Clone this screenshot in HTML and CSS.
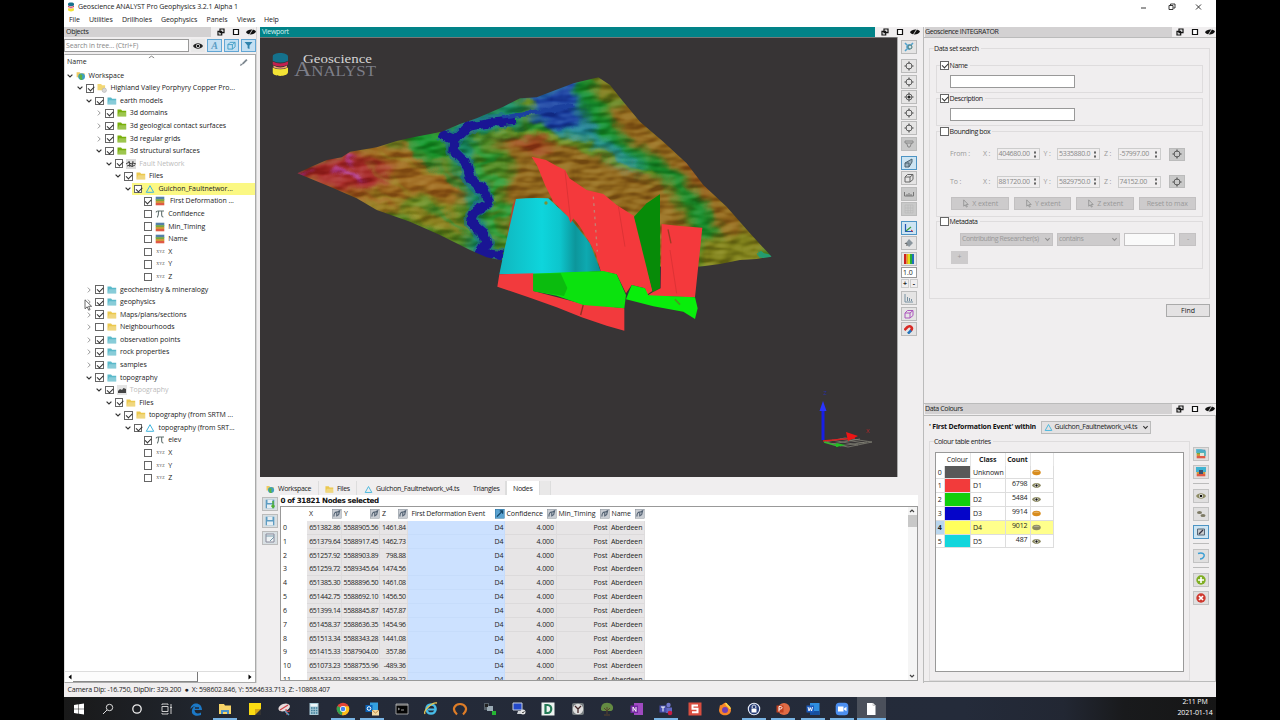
FILE: index.html
```html
<!DOCTYPE html>
<html lang="en">
<head>
<meta charset="utf-8">
<title>Geoscience ANALYST Pro Geophysics 3.2.1 Alpha 1</title>
<link rel="stylesheet" href="styles.css">
</head>
<body>
<svg class="defs" width="0" height="0">
  <defs>
    <symbol id="down" viewBox="0 0 10 10"><path d="M2.600 3.600 5 6l2.400-2.400" fill="none" stroke="#333" stroke-width="1.200"/></symbol>
    <symbol id="right" viewBox="0 0 10 10"><path d="M3.800 2.600 6.200 5 3.800 7.400" fill="none" stroke="#999" stroke-width="1"/></symbol>
    <symbol id="folder" viewBox="0 0 10 10"><path d="M.5 1.500h3.600l1 1.200h4.100v5.800H.5z" fill="currentColor"/><path d="M.5 8.500 2 4.300h7.800l-.9 4.200z" fill="#fff" fill-opacity=".28"/></symbol>
    <symbol id="world" viewBox="0 0 10 10"><path d="M.6 1.200h3l1 1h4v4h-8z" fill="#f0cc60"/><circle cx="5.600" cy="5.600" r="3.400" fill="#3f9fc0"/><path d="M4 3.200c2 0 3 1 2 2.600s1.500 2 0 3.100C4 9 2.500 7 4 3.200z" fill="#5eb33c"/></symbol>
    <symbol id="project" viewBox="0 0 10 10"><path d="M.5 1h3.600l1 1.200h3v5H.5z" fill="#f2d774"/><circle cx="7.300" cy="7.300" r="2.200" fill="#d8d8d8" stroke="#aaa" stroke-width=".5"/></symbol>
    <symbol id="tri" viewBox="0 0 10 10"><path d="M5 1.700 8.700 8.300H1.300z" fill="none" stroke="#3fb4dd" stroke-width="1"/></symbol>
    <symbol id="strata" viewBox="0 0 10 10"><path d="M.7.700h8.600v3H.7z" fill="#5580a8"/><path d="M.7 3.200h8.600v2H.7z" fill="#79a83e"/><path d="M.7 5h8.600v2H.7z" fill="#d0973a"/><path d="M.7 7h8.600v2.300H.7z" fill="#e05a45"/></symbol>
    <symbol id="pi" viewBox="0 0 10 10"><path d="M1 3.400C1.300 2 2 2 3 2h6M3.600 2.200C3.600 5 3.300 7 2.300 8.400M6.700 2.200c-.2 4-.2 6 1.700 5.800" fill="none" stroke="#61706e" stroke-width="1.100"/></symbol>
    <symbol id="fault" viewBox="0 0 10 10"><path d="M0 0h10v10H0z" fill="#dcdcdc"/><path d="M0 5 3 3l2 2 2-1 3 1M1 7l3-1 2 1.500L9 6M3 2l1 6M7 2 6 8" fill="none" stroke="#444" stroke-width="1"/></symbol>
    <symbol id="terrain" viewBox="0 0 10 10"><path d="M0 0h10v10H0z" fill="#e4e4e4"/><path d="M1 8V6l2-2 2 1 1.500-2L9 4v4z" fill="#444"/></symbol>
    <symbol id="eye" viewBox="0 0 10 10"><path d="M0 5c2-3.600 8-3.600 10 0C8 8.600 2 8.600 0 5z" fill="currentColor"/><circle cx="5" cy="5" r="2" fill="#fff"/><circle cx="5" cy="5" r="1.300" fill="#111"/></symbol>
    <symbol id="gold" viewBox="0 0 10 10"><ellipse cx="5" cy="5" rx="4.700" ry="3" fill="currentColor"/><path d="M1.500 4.300c1.500-1.500 5.500-1.500 7 0z" fill="#fff" opacity=".4"/></symbol>
    <symbol id="float" viewBox="0 0 10 10"><path d="M4 2h4v3.600H4zM2 4.400h3.700V8H2z" fill="#eee" stroke="#111" stroke-width="1.200"/></symbol>
    <symbol id="max" viewBox="0 0 10 10"><path d="M2.500 2.500h5v5h-5z" fill="#fff" stroke="#111" stroke-width="1.200"/></symbol>
    <symbol id="hide" viewBox="0 0 10 10"><path d="M0 5.200C1.500 2 8 1.500 10 4.400 8.500 8 2 8.500 0 5.200z" fill="#111"/><path d="M2.500 9 7.500 1" stroke="#ddd" stroke-width=".9"/></symbol>
    <symbol id="filter" viewBox="0 0 10 10"><path d="M.6 1h8.800L6.100 5v4L4 8V5z" fill="#2f83ad"/></symbol>
    <symbol id="target" viewBox="0 0 10 10"><circle cx="5" cy="5" r="3" fill="none" stroke="#555" stroke-width=".9"/><path d="M5 .4v2.400M5 7.200v2.400M.4 5h2.400M7.200 5h2.400" stroke="#555" stroke-width="1.200"/></symbol>
    <symbol id="link" viewBox="0 0 10 10"><path d="M0 0h10v10H0z" fill="#c9cdd3" stroke="#8b9199"/><path d="M2 8c0-4 1-5 4-5l2-1-1 4-2 1M5 3v5" fill="none" stroke="#536273" stroke-width="1.200"/></symbol>
    <symbol id="linkon" viewBox="0 0 10 10"><path d="M0 0h10v10H0z" fill="#5aa2d0" stroke="#2d709b"/><path d="M2 8 8 2M5 2h3v3" fill="none" stroke="#134567" stroke-width="1.300"/></symbol>
    <symbol id="pick" viewBox="0 0 10 10"><path d="M3 1v7l1.700-1.500L6 9l1-.5-1.200-2.400H8z" fill="#ccc" stroke="#888" stroke-width=".8"/></symbol>
    <symbol id="disk" viewBox="0 0 10 10"><path d="M.7.700h8.600v8.600H.7z" fill="#5d9cc2"/><path d="M2.500.700h5v3.200h-5zM2 5.500h6v3.800H2z" fill="#e6eef3"/></symbol>
    <symbol id="cube" viewBox="0 0 10 10"><path d="M1 4h5v5H1zM1 4l2.500-2.500H9L6 4M6 9l3-2.500v-5" fill="none" stroke="currentColor" stroke-width="1"/></symbol>
    <symbol id="logo" viewBox="0 0 16 24"><path d="M0 4c0-5 16-5 16 0v4q-8 4-16 0z" fill="#14718c"/><path d="M0 9q8 4 16 0v3q-8 4-16 0z" fill="#c3204f"/><path d="M1 13q7 4 14 0v2q-7 3-14 0z" fill="#f0a070"/><path d="M0 15q8 4 16 0v5c0 5-16 5-16 0z" fill="#f3e335"/></symbol>
  </defs>
</svg>
<div class="app">
  <div class="titlebar"><svg class="tlogo"><use href="#logo"/></svg><span class="ttext">Geoscience ANALYST Pro Geophysics 3.2.1 Alpha 1</span>
    <svg class="winbtns" viewBox="0 0 70 12"><path d="M3 7h5M31 4.500h4v4h-4zM32.500 4.500V3H37v4h-1.500M58 3.500l5 5M63 3.500l-5 5" fill="none" stroke="#222" stroke-width=".9"/></svg></div>
  <div class="menubar"><span class="m1">File</span><span class="m2">Utilities</span><span class="m3">Drillholes</span><span class="m4">Geophysics</span><span class="m5">Panels</span><span class="m6">Views</span><span>Help</span></div>
  <div class="main">
    <section class="objects">
      <div class="dock"><span class="dtitle">Objects</span><svg><use href="#float"/></svg><svg><use href="#max"/></svg><svg><use href="#hide"/></svg></div>
      <div class="search"><span class="sinput">Search in tree... (Ctrl+F)</span><span class="eyeb"><svg><use href="#eye"/></svg></span><span class="sb"><i>A</i></span><span class="sb cy"><svg><use href="#cube"/></svg></span><span class="sb"><svg><use href="#filter"/></svg></span></div>
      <div class="treebox">
        <div class="thead"><span>Name</span><svg class="sortmark" viewBox="0 0 8 4"><path d="M1 3l3-2 3 2" fill="none" stroke="#777"/></svg><svg class="brush" viewBox="0 0 10 10"><path d="M1 9l1-3 2.500 1.500zM3 6l5-5 1.500 1.500L5 7z" fill="#7e8890"/></svg></div>
        <div class="tree">
          <div class="row l0"><svg><use href="#down"/></svg><svg class="ic"><use href="#world"/></svg>Workspace</div>
          <div class="row l1"><svg><use href="#down"/></svg><b class="cb on"></b><svg class="ic"><use href="#project"/></svg>Highland Valley Porphyry Copper Pro...</div>
          <div class="row l2"><svg><use href="#down"/></svg><b class="cb on"></b><svg class="ic blue"><use href="#folder"/></svg>earth models</div>
          <div class="row l3"><svg><use href="#right"/></svg><b class="cb on"></b><svg class="ic green"><use href="#folder"/></svg>3d domains</div>
          <div class="row l3"><svg><use href="#right"/></svg><b class="cb on"></b><svg class="ic green"><use href="#folder"/></svg>3d geological contact surfaces</div>
          <div class="row l3"><svg><use href="#right"/></svg><b class="cb on"></b><svg class="ic green"><use href="#folder"/></svg>3d regular grids</div>
          <div class="row l3"><svg><use href="#down"/></svg><b class="cb on"></b><svg class="ic green"><use href="#folder"/></svg>3d structural surfaces</div>
          <div class="row l4 dim"><svg><use href="#down"/></svg><b class="cb on"></b><svg class="ic"><use href="#fault"/></svg>Fault Network</div>
          <div class="row l5"><svg><use href="#down"/></svg><b class="cb on"></b><svg class="ic yellow"><use href="#folder"/></svg>Files</div>
          <div class="row l6 sel"><svg><use href="#down"/></svg><b class="cb on"></b><svg class="ic"><use href="#tri"/></svg>Guichon_Faultnetwor...</div>
          <div class="row l7"><b class="cb on"></b><svg class="ic"><use href="#strata"/></svg>&nbsp;First Deformation ...</div>
          <div class="row l7"><b class="cb"></b><svg class="ic"><use href="#pi"/></svg>Confidence</div>
          <div class="row l7"><b class="cb"></b><svg class="ic"><use href="#strata"/></svg>Min_Timing</div>
          <div class="row l7"><b class="cb"></b><svg class="ic"><use href="#strata"/></svg>Name</div>
          <div class="row l7"><b class="cb"></b><em>XYZ</em>X</div>
          <div class="row l7"><b class="cb"></b><em>XYZ</em>Y</div>
          <div class="row l7"><b class="cb"></b><em>XYZ</em>Z</div>
          <div class="row l2"><svg><use href="#right"/></svg><b class="cb on"></b><svg class="ic blue"><use href="#folder"/></svg>geochemistry &amp; mineralogy</div>
          <div class="row l2"><svg><use href="#right"/></svg><b class="cb on"></b><svg class="ic blue"><use href="#folder"/></svg>geophysics</div>
          <div class="row l2"><svg><use href="#right"/></svg><b class="cb on"></b><svg class="ic yellow"><use href="#folder"/></svg>Maps/plans/sections</div>
          <div class="row l2"><svg><use href="#right"/></svg><b class="cb"></b><svg class="ic yellow"><use href="#folder"/></svg>Neighbourhoods</div>
          <div class="row l2"><svg><use href="#right"/></svg><b class="cb on"></b><svg class="ic blue"><use href="#folder"/></svg>observation points</div>
          <div class="row l2"><svg><use href="#right"/></svg><b class="cb on"></b><svg class="ic blue"><use href="#folder"/></svg>rock properties</div>
          <div class="row l2"><svg><use href="#right"/></svg><b class="cb on"></b><svg class="ic blue"><use href="#folder"/></svg>samples</div>
          <div class="row l2"><svg><use href="#down"/></svg><b class="cb on"></b><svg class="ic blue"><use href="#folder"/></svg>topography</div>
          <div class="row l3 dim"><svg><use href="#down"/></svg><b class="cb on"></b><svg class="ic"><use href="#terrain"/></svg>Topography</div>
          <div class="row l4"><svg><use href="#down"/></svg><b class="cb on"></b><svg class="ic yellow"><use href="#folder"/></svg>Files</div>
          <div class="row l5"><svg><use href="#down"/></svg><b class="cb on"></b><svg class="ic yellow"><use href="#folder"/></svg>topography (from SRTM ...</div>
          <div class="row l6"><svg><use href="#down"/></svg><b class="cb on"></b><svg class="ic"><use href="#tri"/></svg>topography (from SRT...</div>
          <div class="row l7"><b class="cb on"></b><svg class="ic"><use href="#pi"/></svg>elev</div>
          <div class="row l7"><b class="cb"></b><em>XYZ</em>X</div>
          <div class="row l7"><b class="cb"></b><em>XYZ</em>Y</div>
          <div class="row l7"><b class="cb"></b><em>XYZ</em>Z</div>
        </div>
        <div class="hscroll"><svg viewBox="0 0 6 8"><path d="M4.500 1.500v5L1.500 4z"/></svg><span class="thumb"></span><svg viewBox="0 0 6 8"><path d="M1.500 1.500v5l3-2.500z"/></svg></div>
      </div>
    </section>

    <section class="center">
      <div class="dock teal"><span class="dtitle">Viewport</span><svg><use href="#float"/></svg><svg><use href="#max"/></svg><svg><use href="#hide"/></svg></div>
      <div class="vrow">
        <div class="view">
          <svg class="scene" viewBox="260 38 637 439">
            <defs>
              <clipPath id="land"><path d="M22 340 60 322 110 300 155 292 180 275 260 262 320 243 370 232 455 215 510 192 560 175 640 140 690 115 740 112 850 70 925 52 960 75 1000 125 1050 185 1120 245 1190 310 1240 375 1310 440 1380 520 1445 590 1400 597 1350 600 1290 612 1228 620 800 620 630 600 590 592 540 570 450 525 360 485 260 450 200 415 120 380z"/></clipPath>
              <filter id="b1" x="-30%" y="-30%" width="160%" height="160%" color-interpolation-filters="sRGB"><feGaussianBlur stdDeviation="12"/></filter>
              <filter id="b2" x="-30%" y="-30%" width="160%" height="160%" color-interpolation-filters="sRGB"><feGaussianBlur stdDeviation="6"/></filter>
              <filter id="rough" x="-10%" y="-10%" width="120%" height="120%" color-interpolation-filters="sRGB"><feTurbulence type="fractalNoise" baseFrequency=".035" numOctaves="3" seed="4" result="n"/><feDisplacementMap in="SourceGraphic" in2="n" scale="20" xChannelSelector="R" yChannelSelector="G"/><feGaussianBlur stdDeviation="1.500"/></filter>
              <filter id="warp" x="-5%" y="-5%" width="110%" height="110%" color-interpolation-filters="sRGB"><feTurbulence type="fractalNoise" baseFrequency=".018 .024" numOctaves="2" seed="14" result="n"/><feDisplacementMap in="SourceGraphic" in2="n" scale="55" xChannelSelector="R" yChannelSelector="G"/></filter>
              <filter id="relief" x="0" y="0" width="100%" height="100%" color-interpolation-filters="sRGB"><feTurbulence type="fractalNoise" baseFrequency=".014 .03" numOctaves="2" seed="8"/><feGaussianBlur stdDeviation="2"/><feDiffuseLighting surfaceScale="16" lighting-color="#fff"><feDistantLight azimuth="230" elevation="32"/></feDiffuseLighting></filter>
              <linearGradient id="cy"><stop offset="0" stop-color="#10b6be"/><stop offset=".42" stop-color="#0ed5dc"/><stop offset=".6" stop-color="#0dc5cc"/><stop offset=".75" stop-color="#0c969b"/><stop offset=".86" stop-color="#0ea9b0"/><stop offset="1" stop-color="#0d8d92"/></linearGradient>
            </defs>
            <g transform="translate(290 60) scale(.33333)">
              <g clip-path="url(#land)">
                <path d="M0 0h1470v640H0z" fill="#4c8420"/>
                <g filter="url(#warp)">
                  <g filter="url(#b1)">
                    <path d="M-20 345 200 260 330 240 400 290 560 400 470 440 380 400 300 470 100 400z" fill="#9a651d"/>
                    <path d="M-20 340 180 260 230 300 310 330 240 400 150 390z" fill="#a52a28"/>
                    <path d="M330 230 440 210 480 300 400 300z" fill="#16922a"/>
                    <path d="M300 450 480 430 550 540 400 500z" fill="#86781a"/>
                    <path d="M455 205 690 105 700 200 560 230 540 320 600 380 590 500 630 600 530 570 540 450 500 330z" fill="#188760"/>
                    <path d="M600 225 780 230 950 290 1130 370 1190 480 1200 640 700 640 650 470 640 400 680 310z" fill="#8f661c"/>
                    <path d="M620 235 720 230 800 255 730 280z" fill="#9c401d"/>
                    <path d="M690 90 860 40 880 160 960 260 800 220 730 190z" fill="#1f5a9c"/>
                    <path d="M870 50 920 180 1000 275 1160 350 1230 440 1250 540" fill="none" stroke="#158a2a" stroke-width="54"/>
                    <path d="M800 200 900 225 1000 300 1060 325" fill="none" stroke="#248f98" stroke-width="34"/>
                    <path d="M960 150 1030 130 1200 290 1300 400 1430 560 1310 570 1250 440 1140 310 1000 240z" fill="#8f641b"/>
                    <path d="M890 50 980 50 1000 120 920 115z" fill="#7c741b"/>
                    <path d="M1240 530 1390 520 1450 640 1220 640z" fill="#7f801b"/>
                    <path d="M1170 300 1210 300 1280 400 1250 390z" fill="#964a19"/>
                  </g>
                  <g filter="url(#b2)">
                    <path d="M740 118 845 68 850 150 870 185 800 205 750 170z" fill="#1c409f"/>
                    <path d="M680 125 720 105 742 130 700 145z" fill="#6c9023"/>
                    <path d="M700 195 740 185 790 225 740 225z" fill="#2d9434"/>
                    <path d="M130 320 155 335 200 345 220 365M170 290 195 300M25 345 55 335" fill="none" stroke="#b1409c" stroke-width="15"/>
                    <path d="M530 230 590 225 650 215 760 225 900 265 1000 315 1100 350" fill="none" stroke="#6a961f" stroke-width="11"/>
                    <path d="M550 260 620 300 560 330 640 370 580 400M600 440 660 450 600 500 650 540" fill="none" stroke="#279a36" stroke-width="17"/>
                    <path d="M350 250 430 280M370 280 450 330 520 390M400 430 470 470 540 530" fill="none" stroke="#259034" stroke-width="11"/>
                    <path d="M230 320 300 360 360 400 440 420M280 280 360 310 470 350M220 390 330 420 500 450M230 430 340 450 470 520" fill="none" stroke="#8f9424" stroke-width="6"/>
                  </g>
                </g>
                <path class="shade" d="M0 0h1470v640H0z" filter="url(#relief)"/>
                <g filter="url(#rough)" fill="none" stroke-linejoin="round">
                  <path d="M450 220 492 240 535 200 600 185 675 178M492 240 490 275 528 310 540 355 580 395 592 430 548 458 540 485 575 515 590 550 570 578 640 588" stroke="#1e6c92" stroke-width="42" opacity=".6"/>
                  <path d="M450 220 495 240 535 200 600 187 675 180M495 240 492 275 528 310 543 355 583 395 595 430 550 458 542 485 577 515 590 550 570 578 640 588" stroke="#1a1594" stroke-width="28"/>
                  <path d="M640 172 740 158 850 135" stroke="#1c419f" stroke-width="13"/>
                  <path d="M1405 582 1450 592" stroke="#249b70" stroke-width="18"/>
                </g>
              </g>
              <path d="M668 435 678 415 660 520 645 570z" fill="#b54530"/>
              <path d="M678 417Q725 412 775 415L845 480 900 550 932 633 820 642 628 643 645 560z" fill="url(#cy)"/>
              <path d="M725 290 768 300 800 318 825 330 838 355 890 390 940 402 980 435 1032 468 1045 510 1088 692 1070 705 1065 685 1025 675 1008 700 980 643 932 633 917 580 900 550 870 500 850 475 842 490 835 470 790 425 765 375 742 318z" fill="#f4393c"/>
              <path d="M825 332 842 484M985 438 1005 560" stroke="#dd3235" stroke-width="3" fill="none"/>
              <path d="M910 410 922 575" stroke="#c58073" stroke-width="4" stroke-dasharray="8 12"/>
              <path d="M1032 470 1070 430 1110 403 1110 685 1088 697z" fill="#078b08"/>
              <path d="M1115 492 1170 498 1237 503 1215 712 1070 708 1088 697 1112 685z" fill="#f4393c"/>
              <path d="M1134 508 1143 550" stroke="#a03b24" stroke-width="4"/><path d="M1140 570 1160 700" stroke="#dd3235" stroke-width="3"/>
              <path d="M628 643 730 640 730 693 870 730 1003 745 1003 812 950 797 875 772 800 742 720 713 622 680z" fill="#f23a3d"/>
              <path d="M880 733 872 765" stroke="#8f2f22" stroke-width="4"/>
              <path d="M730 641 830 637 940 633 980 643 1008 705 1003 745 880 735 800 707 730 693z" fill="#0be20e"/>
              <path d="M730 641 812 640 832 684 822 708 730 693z" fill="#0bbc0e"/>
              <path d="M1025 675 1065 685 1075 706 1215 712 1223 745 1215 777 1180 755 1090 739 1008 718z" fill="#08ee0b"/>
              <path d="M1155 718 1170 734" stroke="#4c9522" stroke-width="5"/>
              <circle cx="768" cy="429" r="5" fill="#7b9136"/>
            </g>
            <use href="#logo" x="272.500" y="52.500" width="15.500" height="24"/>
            <text class="lg1" x="303" y="63" textLength="69" lengthAdjust="spacingAndGlyphs">Geoscience</text>
            <text class="lg2" x="294" y="76" textLength="82" lengthAdjust="spacingAndGlyphs"><tspan class="big">A</tspan>NALYST</text>
            <path d="M823 409v31" stroke="#171ee6" stroke-width="3"/><path d="M823 401l3.500 10h-7z" fill="#2a34ff"/>
            <path d="M825 442l20-4 27 4-24 5zM832 440l26 5M840 439l24 4M832 444l28-5M840 446l27-4" fill="none" stroke="#8a8a7d" stroke-width=".7"/>
            <path d="M823 441l32-3" stroke="#d82020" stroke-width="1.400"/><path d="M846 432l12 4-10 5z" fill="#ee1515"/><path d="M824 442l14 4" stroke="#35b930" stroke-width="1.400"/><path d="M836 443l10 2-10 2z" fill="#22bf22"/>
            <text x="823.500" y="394.500" class="ax z">Z</text><text x="866" y="433" class="ax x">X</text>
          </svg>
        </div>
        <div class="vtools">
          <span class="tb t1"><svg viewBox="0 0 10 10"><path d="M1 1l3 3M9 1 6 4M1 9l3-3M5 2v6M2 5h6" stroke="#56a4cd" stroke-width="1.600"/><circle cx="6" cy="5" r="2" fill="#cfe4ee" stroke="#477"/></svg></span>
          <span class="tb g"><svg><use href="#target"/></svg></span><span class="tb g"><svg><use href="#target"/></svg></span><span class="tb g"><svg viewBox="0 0 10 10"><use href="#target"/><circle cx="5" cy="5" r="1.600" fill="#222"/></svg></span><span class="tb g"><svg><use href="#target"/></svg></span><span class="tb g"><svg><use href="#target"/></svg></span>
          <span class="tb off"><svg viewBox="0 0 10 10"><path d="M1 2h8v2H1zM2.500 4 4 8h2l1.500-4" fill="none" stroke="#888"/></svg></span>
          <span class="tb act t8"><svg viewBox="0 0 10 10"><path d="M1 5h4v4H1zM1 5l7-4v3L5 9" fill="#9bb0bd" stroke="#4d6472"/></svg></span>
          <span class="tb"><svg class="gr"><use href="#cube"/></svg></span>
          <span class="tb off"><svg viewBox="0 0 10 10"><path d="M.5 3v4h9V3M3 5v2M5 4v3M7 5v2" fill="none" stroke="#777"/></svg></span>
          <span class="tb off"><svg viewBox="0 0 10 10"><path d="M1 1h8v8H1zM4 1v8M6.500 1v8M1 4h8M1 6.500h8" fill="none" stroke="#bbb" stroke-width=".6"/></svg></span>
          <span class="tb act t12"><svg viewBox="0 0 10 10"><path d="M1.500 1v7.500H9" fill="none" stroke="#2357b5" stroke-width="1.200"/><path d="M2 8l5-4" stroke="#3a9c3c" stroke-width="1.200"/><path d="M7 7l2 1.500" stroke="#d33"/></svg></span>
          <span class="tb"><svg viewBox="0 0 10 10"><path d="M2 5l3-4 4 4-4 4z" fill="#8b969e"/><path d="M1 6c1-2 2-1 2 2" stroke="#555" fill="none"/></svg></span>
          <span class="tb"><svg viewBox="0 0 10 10"><path d="M0 0h2.500v10H0z" fill="#cc2020"/><path d="M2.500 0H4v10H2.500z" fill="#eca11b"/><path d="M4 0h2v10H4z" fill="#d9df20"/><path d="M6 0h2v10H6z" fill="#25ae35"/><path d="M8 0h2v10H8z" fill="#236dba"/></svg></span>
          <span class="spin">1.0</span>
          <span class="pm"><b>+</b><b>-</b></span>
          <span class="tb t17"><svg viewBox="0 0 10 10"><path d="M1 1v8h8M3.500 8V4M5.500 8V5M7.500 8V6" fill="none" stroke="#7790a1"/></svg></span>
          <span class="tb"><svg class="pu"><use href="#cube"/></svg></span>
          <span class="tb"><svg viewBox="0 0 10 10"><g transform="rotate(45 5 5)" fill="none" stroke-width="2.600"><path d="M2.500 9V5c0-4 5-4 5 0" stroke="#d82a25"/><path d="M7.500 4.500V9" stroke="#2372bb"/></g></svg></span>
        </div>
      </div>
      <div class="tabs"><span class="tab w1"><svg><use href="#world"/></svg>Workspace</span><span class="tab w2"><svg class="yellow"><use href="#folder"/></svg>Files</span><span class="tab w3"><svg><use href="#tri"/></svg>Guichon_Faultnetwork_v4.ts</span><span class="tab w4">Triangles</span><span class="tab w5">Nodes</span><span class="tab w6"></span></div>
      <div class="nodes">
        <div class="ntools"><span><svg viewBox="0 0 10 10"><use href="#disk"/><path d="M8 2v6M6.500 6.500 8 8.500l1.500-2" stroke="#4fae32" stroke-width="1.400" fill="none"/></svg></span><span><svg><use href="#disk"/></svg></span><span><svg viewBox="0 0 10 10"><path d="M1 1h8v8H1z" fill="#eef2f4" stroke="#889"/><path d="M1 3h8M5 8l4-4" stroke="#79a"/></svg></span></div>
        <div class="nbody">
          <div class="nsel">0 of 31821 Nodes selected</div>
          <div class="ntable">
            <div class="grid">
              <div class="gh"><span></span><span>X<svg><use href="#link"/></svg></span><span>Y<svg><use href="#link"/></svg></span><span>Z<svg><use href="#link"/></svg></span><span class="fde">First Deformation Event<svg><use href="#linkon"/></svg></span><span>Confidence<svg><use href="#link"/></svg></span><span>Min_Timing<svg><use href="#link"/></svg></span><span>Name<svg><use href="#link"/></svg></span></div>
              <div class="gr-row"><i>0</i><span>651382.86</span><span>5588905.56</span><span>1461.84</span><span>D4</span><span>4.000</span><span>Post</span><span>Aberdeen</span></div>
              <div class="gr-row"><i>1</i><span>651379.64</span><span>5588917.45</span><span>1462.73</span><span>D4</span><span>4.000</span><span>Post</span><span>Aberdeen</span></div>
              <div class="gr-row"><i>2</i><span>651257.92</span><span>5588903.89</span><span>798.88</span><span>D4</span><span>4.000</span><span>Post</span><span>Aberdeen</span></div>
              <div class="gr-row"><i>3</i><span>651259.72</span><span>5589345.64</span><span>1474.56</span><span>D4</span><span>4.000</span><span>Post</span><span>Aberdeen</span></div>
              <div class="gr-row"><i>4</i><span>651385.30</span><span>5588896.50</span><span>1461.08</span><span>D4</span><span>4.000</span><span>Post</span><span>Aberdeen</span></div>
              <div class="gr-row"><i>5</i><span>651442.75</span><span>5588692.10</span><span>1456.50</span><span>D4</span><span>4.000</span><span>Post</span><span>Aberdeen</span></div>
              <div class="gr-row"><i>6</i><span>651399.14</span><span>5588845.87</span><span>1457.87</span><span>D4</span><span>4.000</span><span>Post</span><span>Aberdeen</span></div>
              <div class="gr-row"><i>7</i><span>651458.37</span><span>5588636.35</span><span>1454.96</span><span>D4</span><span>4.000</span><span>Post</span><span>Aberdeen</span></div>
              <div class="gr-row"><i>8</i><span>651513.34</span><span>5588343.28</span><span>1441.08</span><span>D4</span><span>4.000</span><span>Post</span><span>Aberdeen</span></div>
              <div class="gr-row"><i>9</i><span>651415.33</span><span>5587904.00</span><span>357.86</span><span>D4</span><span>4.000</span><span>Post</span><span>Aberdeen</span></div>
              <div class="gr-row"><i>10</i><span>651073.23</span><span>5588755.96</span><span>-489.36</span><span>D4</span><span>4.000</span><span>Post</span><span>Aberdeen</span></div>
              <div class="gr-row"><i>11</i><span>651533.02</span><span>5588251.39</span><span>1439.22</span><span>D4</span><span>4.000</span><span>Post</span><span>Aberdeen</span></div>
            </div>
            <div class="vscroll"><svg viewBox="0 0 8 8"><path d="M2 5l2-2 2 2" fill="none" stroke="#444" stroke-width="1.200"/></svg><span></span><svg class="end" viewBox="0 0 8 8"><path d="M2 3l2 2 2-2" fill="none" stroke="#444" stroke-width="1.200"/></svg></div>
          </div>
        </div>
      </div>
    </section>

    <section class="side">
      <div class="dock"><span class="dtitle">Geoscience INTEGRATOR</span><svg><use href="#float"/></svg><svg><use href="#max"/></svg><svg><use href="#hide"/></svg></div>
      <div class="integrator">
        <fieldset class="outer"><legend>Data set search</legend>
          <fieldset class="f1"><legend><b class="cb on"></b>Name</legend><span class="inp"></span></fieldset>
          <fieldset class="f2"><legend><b class="cb on"></b>Description</legend><span class="inp"></span></fieldset>
          <fieldset class="f3"><legend><b class="cb"></b>Bounding box</legend>
            <div class="coord"><span class="c0">From :</span><span class="cl">X :</span><span class="num">404680.00<s></s></span><span class="cl">Y :</span><span class="num">5335880.0<s></s></span><span class="cl">Z :</span><span class="num">-57997.00<s></s></span><span class="tg"><svg><use href="#target"/></svg></span></div>
            <div class="coord"><span class="c0">To :</span><span class="cl">X :</span><span class="num">881720.00<s></s></span><span class="cl">Y :</span><span class="num">5829750.0<s></s></span><span class="cl">Z :</span><span class="num">74152.00<s></s></span><span class="tg"><svg><use href="#target"/></svg></span></div>
            <div class="ext"><span><svg><use href="#pick"/></svg>X extent</span><span><svg><use href="#pick"/></svg>Y extent</span><span><svg><use href="#pick"/></svg>Z extent</span><span>Reset to max</span></div>
          </fieldset>
          <fieldset class="f4"><legend><b class="cb"></b>Metadata</legend>
            <div class="meta"><span class="s1">Contributing Researcher(s)<svg><use href="#down"/></svg></span><span class="s2">contains<svg><use href="#down"/></svg></span><span class="s3"></span><span class="s4">-</span></div>
            <div class="plus">+</div>
          </fieldset>
        </fieldset>
        <div class="find">Find</div>
      </div>
      <div class="dock low"><span class="dtitle">Data Colours</span><svg><use href="#float"/></svg><svg><use href="#max"/></svg><svg><use href="#hide"/></svg></div>
      <div class="colours">
        <div class="within"><b>' First Deformation Event' within</b><span><svg><use href="#tri"/></svg>Guichon_Faultnetwork_v4.ts<svg class="dn"><use href="#down"/></svg></span></div>
        <div class="crow">
          <fieldset class="cset"><legend>Colour table entries</legend>
            <div class="cbox">
              <div class="ch"><i></i><span>Colour</span><b>Class</b><b>Count</b><u></u></div>
              <div class="cr"><i>0</i><span class="k0"></span><b>Unknown</b><b></b><u class="or"><svg><use href="#gold"/></svg></u></div>
              <div class="cr"><i>1</i><span class="k1"></span><b>D1</b><b>6798</b><u><svg><use href="#eye"/></svg></u></div>
              <div class="cr"><i>2</i><span class="k2"></span><b>D2</b><b>5484</b><u><svg><use href="#eye"/></svg></u></div>
              <div class="cr"><i>3</i><span class="k3"></span><b>D3</b><b>9914</b><u class="or"><svg><use href="#gold"/></svg></u></div>
              <div class="cr hl"><i>4</i><span class="k4"></span><b>D4</b><b>9012</b><u><svg><use href="#gold"/></svg></u></div>
              <div class="cr"><i>5</i><span class="k5"></span><b>D5</b><b>487</b><u><svg><use href="#eye"/></svg></u></div>
            </div>
          </fieldset>
          <div class="ctools">
            <span><svg viewBox="0 0 10 10"><use href="#strata"/><path d="M0 0h5l5 2v5H4V4H0z" fill="#4cb8d0" opacity=".8"/><path d="M4 4h4v3H4z" fill="#e6e6d8"/></svg></span>
            <span><svg viewBox="0 0 10 10"><use href="#strata"/><path d="M0 0h10v5H0z" fill="#3fb3d2"/><path d="M3 3h4v4H3z" fill="#385070"/></svg></span><hr>
            <span><svg><use href="#eye"/></svg></span><span><svg viewBox="0 0 10 10"><ellipse cx="3.500" cy="3.500" rx="2.500" ry="1.500" fill="#7d7a65"/><ellipse cx="7" cy="6.500" rx="2.500" ry="1.500" fill="#7d7a65"/></svg></span><span class="act"><svg viewBox="0 0 10 10"><path d="M1.500 2h7v6h-7z" fill="#c8cacc" stroke="#567"/><path d="M3 7l4-4" stroke="#334" stroke-width="1.300"/></svg></span><hr>
            <span><svg viewBox="0 0 10 10"><path d="M2 2.500c5-1.500 7 1 6 3S5 8 4 8" fill="none" stroke="#3d9fd4" stroke-width="1.500"/></svg></span><hr>
            <span><svg viewBox="0 0 10 10"><circle cx="5" cy="5" r="4.700" fill="#7fae22"/><path d="M5 2v6M2 5h6" stroke="#fff" stroke-width="1.600"/></svg></span>
            <span><svg viewBox="0 0 10 10"><circle cx="5" cy="5" r="4.700" fill="#cf392f"/><path d="M3 3l4 4M7 3 3 7" stroke="#fff" stroke-width="1.700"/></svg></span>
          </div>
        </div>
      </div>
    </section>
  </div>
  <div class="status">Camera Dip: -16.750, DipDir: 329.200 &nbsp;●&nbsp; X: 598602.846, Y: 5564633.713, Z: -10808.407</div>
  <div class="taskbar">
    <span><svg viewBox="0 0 16 16"><path d="M3 4l4.500-.7v4.400H3zM8 3.200 13 2.500v5.200H8zM3 8.300h4.500v4.400L3 12zM8 8.300h5v5.200l-5-.7z" fill="#fff"/></svg></span>
    <span><svg viewBox="0 0 16 16"><circle cx="9.500" cy="6.500" r="3.200" fill="none" stroke="#ddd"/><path d="M7 9l-4 4" stroke="#ddd"/></svg></span>
    <span><svg viewBox="0 0 16 16"><circle cx="8" cy="8" r="4.200" fill="none" stroke="#eee" stroke-width="1.300"/></svg></span>
    <span><svg viewBox="0 0 16 16"><path d="M3 5.500h6v5H3zM3 4V3h6v1M3 12v1h6v-1M12 3v10M11 6.500h2" fill="none" stroke="#ccc"/></svg></span>
    <span><svg viewBox="0 0 16 16"><path d="M2.500 8C3 .5 14 .5 14 9H6.500c.5 4 4 4 6.500 2.500V14C7 16.500 2 13 4.500 7.500 5 6 7 5 8 5c-2 0-4 1-5.500 3z" fill="#1b79c7"/><path d="M7 7h4" stroke="#222a38" stroke-width="1.500"/></svg></span>
    <span class="run"><svg viewBox="0 0 16 16"><path d="M2 3h5l1 1.500h6V13H2z" fill="#f7d467"/><path d="M4 9h8v4H4z" fill="#4a93ca"/><path d="M6 11h4v2H6z" fill="#f7d467"/></svg></span>
    <span><svg viewBox="0 0 16 16"><path d="M2 2h12v12H2z" fill="#fadb12"/><path d="M8 8h6v6H8z" fill="#333"/><path d="M8 8h6l-6 6z" fill="#d6a814"/></svg></span>
    <span><svg viewBox="0 0 16 16"><ellipse cx="8" cy="6.500" rx="6" ry="3.600" fill="#e8dcdc" transform="rotate(-20 8 6)"/><path d="M4 9l8-5M10 8l1 6M9 11l5-1" stroke="#cf4148" stroke-width="1.200"/><path d="M9 10l4 4" stroke="#5ba0c5" stroke-width="1.500"/></svg></span>
    <span><svg viewBox="0 0 16 16"><path d="M3.500 2h9v12h-9z" fill="#a9cbd8"/><path d="M4.500 3h7v2.500h-7z" fill="#eef7fa"/><path d="M5 7h6.500M5 9.500h6.500M5 12h6.500" stroke="#3f7f9a" stroke-width="1.400" stroke-dasharray="1.600 .8"/></svg></span>
    <span class="run"><svg viewBox="0 0 16 16"><circle cx="8" cy="8" r="6.300" fill="#e54335"/><path d="M8 8 2.500 5A6.300 6.300 0 0 0 7 14.200z" fill="#31a350"/><path d="M8 8 7 14.200A6.300 6.300 0 0 0 13.500 5.200H8z" fill="#fbc21b"/><circle cx="8" cy="8" r="3" fill="#fff"/><circle cx="8" cy="8" r="2.300" fill="#4583ee"/></svg></span>
    <span class="run"><svg viewBox="0 0 16 16"><path d="M6 1.500h8v9H6z" fill="#35a1e0"/><path d="M1.500 4h7v7h-7z" fill="#0b63b8"/><circle cx="5" cy="7.500" r="1.800" fill="none" stroke="#fff"/><path d="M8 9h7v5.500H8z" fill="#f2d9a2"/><path d="M8 9l3.500 3L15 9" fill="none" stroke="#c08a45"/></svg></span>
    <span><svg viewBox="0 0 16 16"><path d="M2 3h12v10H2z" fill="#050505" stroke="#bbb" stroke-width=".8"/><path d="M2 4h12" stroke="#bbb"/><path d="M4 7l1.500 1L4 9M7 9h3" stroke="#ddd" fill="none" stroke-width=".7"/></svg></span>
    <span><svg viewBox="0 0 16 16"><circle cx="8" cy="8" r="4.600" fill="none" stroke="#48bce8" stroke-width="2.500"/><path d="M5 8.500h8" stroke="#48bce8" stroke-width="2"/><path d="M2 13C0 10 9 1 14 2" fill="none" stroke="#e8c651" stroke-width="1.300"/></svg></span>
    <span><svg viewBox="0 0 16 16"><path d="M5 13.500C-1 8 3 3 8 3s9 5 3 10.500" fill="none" stroke="#df7d27" stroke-width="2.200"/></svg></span>
    <span><svg viewBox="0 0 16 16"><path d="M2 2h5v7H2z" fill="#555f68"/><path d="M5 5h6v5H5z" fill="#9aaab4"/><path d="M10 10h4v4h-4z" fill="#25b633"/><path d="M3 3h3v3H3z" fill="#222"/></svg></span>
    <span><svg viewBox="0 0 16 16"><path d="M2 2h9v7H2z" fill="#2348c9" stroke="#c7cfdf"/><path d="M7 10h6v3H6z" fill="#d0d3d7"/><circle cx="12" cy="11" r="2.500" fill="#e5e5e5"/><path d="M11 11l1 1 1.500-2" stroke="#555" fill="none"/></svg></span>
    <span><svg viewBox="0 0 16 16"><path d="M1.500 1.500h13v13h-13z" fill="#eef3f0"/><path d="M5.500 4v8h2c5 0 5-8 0-8z" fill="none" stroke="#247a56" stroke-width="2.200"/></svg></span>
    <span><svg viewBox="0 0 16 16"><rect x="2" y="2" width="12" height="12" rx="2" fill="#777d80"/><circle cx="8" cy="8" r="5.200" fill="#dedede"/><path d="M8 8v4M8 8 5 5M8 8l3-3" stroke="#46282a" stroke-width="1.300"/></svg></span>
    <span><svg viewBox="0 0 16 16"><path d="M3 4c2-3 8-3 10 0 2 2 1 6-1 6H4C1 10 2 6 3 4z" fill="#648b42"/><path d="M8 6v7M5 7l3 3 3-3M5 14h6" stroke="#58442d" fill="none"/></svg></span>
    <span><svg viewBox="0 0 16 16"><path d="M5 2h9v12H5z" fill="#a04ac1"/><path d="M1.500 4.500h7.500v7.500H1.500z" fill="#7327a1"/><path d="M4 10.500V6l3 4.500V6" fill="none" stroke="#fff"/></svg></span>
    <span class="run"><svg viewBox="0 0 16 16"><circle cx="10.500" cy="4" r="2.200" fill="#7177ce"/><path d="M7 6.500h7V12H8z" fill="#6269c4"/><path d="M1.500 4.500h7v7h-7z" fill="#474fb0"/><path d="M3 6h4M5 6v4.500" stroke="#fff"/><circle cx="12" cy="12" r="2.300" fill="#c51c42"/></svg></span>
    <span><svg viewBox="0 0 16 16"><path d="M1.500 1.500h13v13h-13z" fill="#da4e40"/><path d="M11 4.500H5.500v3.200h5v3.600H5" fill="none" stroke="#fff" stroke-width="2"/></svg></span>
    <span><svg viewBox="0 0 16 16"><path d="M3 4c2 1 3-2 6-2.500 0 2 5 3 5 7.500 0 7-12 7-12 0z" fill="#f78528"/><circle cx="8" cy="9" r="3" fill="#7140b5"/><path d="M9 2c0 3 4 3 4 6" stroke="#fed447" stroke-width="1.800" fill="none"/></svg></span>
    <span class="run"><svg viewBox="0 0 16 16"><circle cx="8" cy="8" r="5.700" fill="#273c75" stroke="#e9eef8" stroke-width="1.100"/><path d="M5.500 7.500h5v4h-5z" fill="#fff"/><path d="M6.200 7V5.500c0-2 3.600-2 3.600 0V7" fill="none" stroke="#fff"/></svg></span>
    <span class="run"><svg viewBox="0 0 16 16"><circle cx="9" cy="8" r="6" fill="#e06b45"/><path d="M1.500 4.500h7v7h-7z" fill="#c2401f"/><path d="M4 10.500v-5h1.500c2 0 2 2.500 0 2.500H4" fill="none" stroke="#fff"/></svg></span>
    <span class="run"><svg viewBox="0 0 16 16"><path d="M5 2h9.500v12H5z" fill="#2f8ee0"/><path d="M5 10h9.500v4H5z" fill="#164f9e"/><path d="M1.500 4.500h7.500v7H1.500z" fill="#1a5abd"/><path d="M3 6l1 4 1.200-3.500L6.500 10l1-4" fill="none" stroke="#fff" stroke-width=".9"/></svg></span>
    <span class="run"><svg viewBox="0 0 16 16"><rect x="1.700" y="1.700" width="12.600" height="12.600" rx="3.500" fill="#4c8ff0"/><path d="M4 5.500h5.500v5H4zM10 7.500l2.500-1.700v4.500L10 8.600z" fill="#fff"/></svg></span>
    <span class="run cur"><svg viewBox="0 0 16 16"><path d="M4 2h6l2.500 2.500V14H4z" fill="#fff"/><path d="M10 2v2.500h2.500" fill="none" stroke="#aaa" stroke-width=".6"/></svg></span>
    <div class="clock"><div>2:11 PM</div><div>2021-01-14</div></div>
  </div>
</div>
<svg class="cursor" viewBox="0 0 8 12"><path d="M1 .8v9l2.200-2 1.500 3.400 1.400-.6-1.500-3.300h3z" fill="#fff" stroke="#444" stroke-width=".8"/></svg>
</body>
</html>
```

FILE: styles.css
```css
* { box-sizing: border-box; }
body { margin: 0; background: #000; width: 1280px; height: 720px; overflow: hidden; font: 7px/10px "Open Sans", "Noto Sans", sans-serif; color: #222; }
.defs { display: block; }
svg { flex: none; }
i, em { font-style: normal; }
.app { margin-left: 64px; width: 1152px; height: 720px; background: #f0eeef; display: flex; flex-direction: column; overflow: hidden; }
.titlebar { height: 13px; background: #fff; display: flex; align-items: center; padding-left: 4px; }
.tlogo { width: 6px; height: 10px; margin-right: 4px; }
.ttext { letter-spacing: -.09px; }
.winbtns { width: 70px; height: 12px; margin: 0 8px 0 auto; }
.menubar { height: 14px; background: #fff; display: flex; align-items: center; padding-left: 5px; white-space: nowrap; letter-spacing: -.08px; }
.m1 { width: 20px; } .m2 { width: 33px; } .m3 { width: 39px; } .m4 { width: 45.500px; } .m5 { width: 30.500px; } .m6 { width: 27px; }
.main { height: 656px; display: flex; }
.dock { height: 10px; display: flex; align-items: center; }
.dock svg { width: 10px; height: 10px; margin-left: 5px; }
.dtitle { flex: 1; background: #d3d1d2; height: 10px; line-height: 10px; padding-left: 2px; margin-right: 0; letter-spacing: -.3px; }

/* objects panel */
.objects { width: 193px; margin-right: 3px; border-right: 1px solid #d5d5d5; }
.search { height: 15px; padding-top: 2px; display: flex; gap: 2px; width: 192px; }
.sinput { width: 125px; height: 13px; border: 1px solid #999; background: #fff; color: #888; line-height: 11px; padding-left: 1px; white-space: nowrap; letter-spacing: -.14px; }
.eyeb { width: 14px; height: 13px; display: grid; place-items: center; background: #e8e8e8; color: #222; }
.eyeb svg { width: 10px; height: 10px; }
.sb { width: 15px; height: 13px; border: 1px solid #62a6d4; background: #c4e0f3; display: grid; place-items: center; font: italic bold 10px/10px "Liberation Serif", serif; color: #5a9cc4; }
.sb i { font-style: italic; }
.sb svg { width: 9px; height: 9px; }
.cy { color: #3d9cc5; }
.treebox { height: 629px; margin-top: 2px; background: #fff; border: 1px solid #aaa; border-left-color: #ddd; display: flex; flex-direction: column; }
.thead { height: 14.400px; display: flex; align-items: center; padding-left: 2px; }
.thead span { width: 81px; }
.sortmark { width: 7px; height: 4px; align-self: flex-start; }
.brush { width: 9px; height: 9px; margin-left: 84px; }
.tree { flex: 1; }
.row { height: 12.590px; display: flex; align-items: center; white-space: nowrap; letter-spacing: -.04px; }
.row svg { width: 10px; height: 10px; margin-right: 1.700px; }
.row .ic { margin-right: 3px; }
.cb { width: 8.500px; height: 8.500px; border: 1px solid #666; background: #fff; flex: none; display: block; }
.row .cb { margin-right: 3px; margin-left: -.5px; }
.on::after { content: ""; display: block; width: 5px; height: 2.500px; margin: 1px 0 0 .8px; border-left: 1px solid #333; border-bottom: 1px solid #333; transform: rotate(-45deg); }
.row em { width: 11px; font: 4px/8px "Liberation Serif", serif; letter-spacing: .2px; color: #555; margin-right: 2px; padding-left: 1px; }
.l0 { padding-left: 0; } .l1 { padding-left: 9.700px; } .l2 { padding-left: 19.300px; } .l3 { padding-left: 29px; } .l4 { padding-left: 38.600px; } .l5 { padding-left: 48.200px; } .l6 { padding-left: 57.800px; } .l7 { padding-left: 79.200px; }
.row.l0 svg { margin-right: 1px; } .row.l0 .ic { margin-right: 2.500px; }
.dim { color: #bbb; }
.sel { background: linear-gradient(90deg, #fff 67px, #fbf883 67px); }
.blue { color: #5ab9ca; } .green { color: #78b00b; } .yellow { color: #ebc84e; }
.hscroll { height: 11px; display: flex; align-items: center; padding: 0 2px; border-top: 1px solid #ddd; }
.hscroll svg { width: 6px; height: 8px; }
.hscroll svg:last-child { margin-left: auto; }
.thumb { width: 125px; height: 10px; background: #fcfcfc; border-right: 1px solid #777; border-bottom: 1px solid #888; }

/* viewport */
.center { width: 660px; margin-right: 3px; }
.teal .dtitle { background: #018388; color: #d9f2f2; margin-right: 0; }
.vrow { display: flex; height: 440px; }
.view { width: 637px; height: 440px; background: #373435; border-top: 1px solid #777; }
.scene { display: block; width: 637px; height: 439px; }
.shade { mix-blend-mode: soft-light; opacity: .5; }
.lg1 { font: 13px "Liberation Serif", serif; fill: #d5d5d5; }
.lg2 { font: 15.500px "Liberation Serif", serif; fill: #7d7e88; }
.big { font-size: 22px; }
.ax { font-size: 6px; } .z { fill: #2730a6; } .x { fill: #b52525; }
.vtools { width: 23px; padding: 3px 0 0 3px; display: flex; flex-direction: column; border-left: 1px solid #aaa; }
.tb { width: 16px; height: 14px; margin-bottom: 1.500px; border: 1px solid #bbb; background: #e5e4e4; display: grid; place-items: center; flex: none; }
.tb svg { width: 10px; height: 10px; }
.t1 { margin-bottom: 5px; }
.off { background: #c9c9c9; }
.act { background: #cde4f2 !important; border-color: #4d94c4 !important; }
.t8 { margin-top: 3.500px; } .t12 { margin-top: 3px; } .t17 { margin-top: 3px; }
.gr { color: #666; } .pu { color: #ac55bd; }
.spin { height: 11px; width: 16px; background: #fff; border: 1px solid #999; line-height: 9px; padding-left: 1px; }
.pm { height: 9px; display: flex; gap: 1px; margin-top: 1px; }
.pm b { width: 8px; border: 1px solid #ccc; line-height: 7px; text-align: center; }

/* nodes table */
.tabs { height: 14px; margin-top: 4px; display: flex; padding-left: 5px; letter-spacing: -.32px; }
.tab { display: flex; align-items: center; white-space: nowrap; border-right: 1px solid #ddd; padding-top: 2px; }
.tab svg { width: 9px; height: 9px; margin-right: 3px; }
.w1 { width: 54px; padding-left: 1px; } .w2 { width: 38px; padding-left: 6px; } .w3 { width: 110px; padding-left: 7px; border: 0; } .w4 { width: 39px; padding-left: 6px; } .w5 { width: 34px; background: #fff; padding-left: 6px; border-left: 1px solid #ddd; } .w6 { width: 11px; background: #e9e8e8; }
.nodes { display: flex; height: 188px; padding-left: 2px; }
.ntools { width: 18px; padding-top: 2px; }
.ntools span { display: grid; place-items: center; width: 16px; height: 14px; border: 1px solid #bbb; background: #d8dfe3; margin-bottom: 3px; }
.ntools svg { width: 10px; height: 10px; }
.nbody { width: 638px; }
.nsel { height: 11px; background: #fff; font: bold 7.200px/11px "DejaVu Sans", sans-serif; letter-spacing: -.37px; padding-left: .5px; white-space: nowrap; color: #111; }
.ntable { height: 175px; border: 1px solid #999; background: #fff; display: flex; justify-content: space-between; overflow: hidden; }
.grid { width: 364px; }
.gh, .gr-row { display: grid; grid-template-columns: 26px 35px 38px 27.500px 97px 52px 53px 35px; }
.gh { height: 14px; align-items: center; letter-spacing: -.05px; }
.gh span { display: flex; justify-content: space-between; padding: 0 .5px 0 2px; align-items: center; white-space: nowrap; }
.gh .fde { padding-left: 4px; letter-spacing: -.17px; }
.gh svg { width: 9.500px; height: 9.500px; overflow: visible; }
.gr-row { height: 13.820px; line-height: 13px; }
.gr-row i { padding-left: 2px; }
.gr-row span { background: #e7e5e6; border-bottom: 1px solid #dcdadb; border-right: 1px solid #dedcdd; text-align: right; padding-right: 1px; overflow: visible; white-space: nowrap; letter-spacing: -.05px; }
.gr-row span:nth-child(-n+4) { letter-spacing: -.3px; padding-right: .7px; }
.gr-row span:nth-child(5) { background: #cce1ff; border-color: #c6dcfb; padding-right: 0; }
.gr-row span:nth-child(6) { padding-right: 1.500px; }
.vscroll { width: 9px; display: flex; flex-direction: column; background: #f5f5f5; }
.vscroll svg { width: 8px; height: 8px; }
.vscroll span { height: 12px; background: #c8c8c8; }
.vscroll .end { margin-top: auto; }

/* right column */
.side { width: 293px; border-left: 1px solid #bbb; }
.side .dtitle { flex: none; width: 247px; margin-right: 0; margin-left: 1px; padding-left: 0; letter-spacing: -.38px; }
.side .dock svg { margin-left: 5px; }
.side .dock svg:nth-child(2) { margin-left: 3px; }
.integrator { height: 367px; border-bottom: 1px solid #bbb; padding: 5.500px 6px 0 5px; border-top: 1px solid #bbb; }
fieldset { margin: 0; padding: 0; border: 1px solid #dedcdd; min-width: 0; }
legend { height: 10px; padding: 0 2px 0 0; display: flex; align-items: center; letter-spacing: -.38px; }
.outer { height: 255px; padding: 0 6px; }
.outer > legend { margin-left: -2px; padding-left: 0; }
.outer legend .cb { margin-right: 1px; }
.outer fieldset legend { margin-left: 3px; }
.f1 { height: 32px; margin-top: 7px; } .f2 { height: 32px; margin-top: 1px; } .f3 { height: 90px; margin-top: 1px; } .f4 { height: 52px; }
.inp { display: block; width: 125px; height: 13px; margin: 4px 0 0 13px; background: #fff; border: 1px solid #999; }
.f3, .f4 { color: #999; }
.f3 legend, .f4 legend { color: #222; }
.coord { display: flex; height: 13px; align-items: center; margin: 11px 0 0 13px; white-space: nowrap; letter-spacing: -.15px; }
.coord + .coord { margin-top: 14.500px; }
.c0 { width: 33px; } .cl { width: 13.500px; }
.num { width: 43px; margin-right: 4px; height: 12px; border: 1px solid #ccc; line-height: 10px; display: flex; justify-content: space-between; padding: 0 2px 0 1px; align-items: center; letter-spacing: -.3px; color: #888; }
.num s { width: 4px; height: 7px; background: radial-gradient(circle at 2px 1.500px, #666 .9px, transparent 1.400px), radial-gradient(circle at 2px 5.500px, #666 .9px, transparent 1.400px); }
.tg { width: 16px; height: 13px; background: #c9c9c9; border: 1px solid #bbb; display: grid; place-items: center; margin-left: 4px; }
.tg svg { width: 10px; height: 10px; }
.ext { display: flex; gap: 5px; margin: 9px 0 0 14px; letter-spacing: -.1px; }
.ext span { width: 57.500px; height: 13px; background: #cdcbcc; border: 1px solid #c2c0c1; display: flex; align-items: center; justify-content: center; gap: 2px; }
.ext svg { width: 9px; height: 9px; }
.meta { display: flex; margin: 6px 0 0 23px; gap: 4px; height: 13px; letter-spacing: -.4px; }
.meta span { height: 13px; background: #cdcbcc; border: 1px solid #c4c2c3; display: flex; align-items: center; justify-content: space-between; white-space: nowrap; padding-left: 1px; }
.meta svg { width: 9px; height: 9px; opacity: .4; }
.s1 { width: 93px; } .s2 { width: 63px; } .meta .s3 { width: 51px; background: #fafafa; } .meta .s4 { width: 17px; justify-content: center; }
.plus { width: 17px; height: 13px; margin: 5px 0 0 14px; background: #cdcbcc; text-align: center; line-height: 12px; }
.find { width: 44px; height: 13px; margin: 5px 0 0 auto; background: #e4e2e3; border: 1px solid #aaa; text-align: center; line-height: 11px; }
.low { height: 10.500px; }
.colours { height: 267px; border: 1px solid #bbb; border-left: 0; padding: 5px 6px 0 5px; }
.within { display: flex; height: 13px; align-items: center; white-space: nowrap; }
.within b { width: 112px; font-weight: 700; color: #111; letter-spacing: -.2px; }
.within span { width: 110px; height: 13px; border: 1px solid #bbb; background: #e3e1e2; display: flex; align-items: center; padding-left: 2px; letter-spacing: -.34px; }
.within svg { width: 9px; height: 9px; margin-right: 1.500px; }
.within .dn { margin: 0 0 0 auto; }
.crow { display: flex; justify-content: space-between; }
.cset { width: 261px; height: 244px; padding: 0 5px; margin-top: 3px; }
.cset legend { margin-left: -1px; }
.cbox { height: 220px; margin-top: 5px; background: #fff; border: 1px solid #999; }
.ch, .cr { display: grid; grid-template-columns: 8.500px 26.500px 34.500px 25px 23px; height: 13.820px; width: 118px; align-items: center; }
.ch { height: 13px; text-align: center; letter-spacing: -.1px; }
.ch b { color: #222; }
.ch > * { border-right: 1px solid #e5e5e5; height: 13px; line-height: 13px; }
.ch i { border: 0; }
.cr > * { height: 13.820px; border-right: 1px solid #ddd; border-bottom: 1px solid #ddd; line-height: 13px; }
.cr i { text-align: center; }
.cr b { font-weight: 400; padding-left: 2px; letter-spacing: -.1px; }
.cr b:nth-child(4) { text-align: right; padding-right: 2px; line-height: 9px; }
.cr u { display: block; padding: 2px 0 0 1.500px; color: #8c8a62; }
.cr u svg { width: 9px; height: 9px; display: block; }
.or { color: #d88c1c !important; }
.hl > * { background: #ffff8c; }
.hl i { background: #b9d6ee; font-weight: 700; }
.k0 { background: #595959; } .k1 { background: #f23b3b; } .k2 { background: #10ce0c; } .k3 { background: #0505c9; } .k4 { background: #ffff5d; } .k5 { background: #12d6dc; }
.ctools { width: 16px; padding-top: 13px; }
.ctools span { display: grid; place-items: center; width: 16px; height: 14px; border: 1px solid #c2c2c2; background: #e0dfdf; margin-bottom: 4px; color: #8c8a62; }
.ctools svg { width: 10px; height: 10px; }
.ctools hr { border: 0; border-top: 1px solid #bbb; margin: 1px 0 5px; }

.status { height: 14px; line-height: 14px; padding-left: 3.500px; background: #f0eeef; white-space: nowrap; letter-spacing: -.18px; }
.taskbar { height: 23px; background: linear-gradient(90deg, #191919, #20252d 130px, #242a38 260px, #242b3a 900px, #222733 1000px, #191a1c 1060px, #161616); display: flex; color: #fff; }
.taskbar > span { width: 29.370px; height: 23px; display: grid; place-items: center; flex: none; }
.taskbar > span svg { width: 16px; height: 16px; }
.taskbar .run { background: linear-gradient(#79b4e4, #79b4e4) center bottom / 24px 2px no-repeat; }
.taskbar .cur { background-color: #4b505b; background-size: 29px 2px; }
.clock { margin-left: auto; width: 42px; text-align: center; font-size: 7px; line-height: 10.500px; white-space: nowrap; letter-spacing: -.15px; }
.cursor { position: absolute; left: 84px; top: 299px; width: 8px; height: 12px; }
```
